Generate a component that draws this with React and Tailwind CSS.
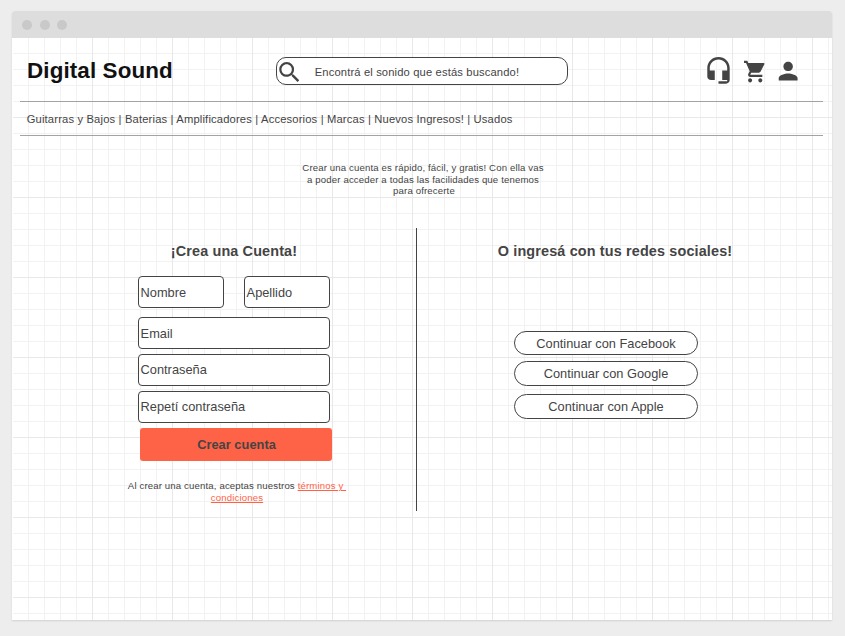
import React from "react";

function Icon({ className, viewBox, d }) {
  return (
    <svg className={className} viewBox={viewBox} preserveAspectRatio="none" fill="#444444" aria-hidden="true">
      <path d={d} />
    </svg>
  );
}

const SEARCH =
  "M15.5 14h-.79l-.28-.27A6.471 6.471 0 0 0 16 9.5 6.5 6.5 0 1 0 9.5 16c1.61 0 3.09-.59 4.23-1.57l.27.28v.79l5 4.99L20.49 19l-4.99-5zm-6 0C7.01 14 5 11.99 5 9.5S7.01 5 9.5 5 14 7.01 14 9.5 11.99 14 9.5 14z";
const HEADSET =
  "M12 1c-4.97 0-9 4.03-9 9v7c0 1.66 1.34 3 3 3h3v-8H5v-2c0-3.87 3.13-7 7-7s7 3.13 7 7v2h-4v8h4v1h-7v2h6c1.66 0 3-1.34 3-3V10c0-4.97-4.03-9-9-9z";
const CART =
  "M7 18c-1.1 0-1.99.9-1.99 2S5.9 22 7 22s2-.9 2-2-.9-2-2-2zM1 2v2h2l3.6 7.59-1.35 2.45c-.16.28-.25.61-.25.96 0 1.1.9 2 2 2h12v-2H7.42c-.14 0-.25-.11-.25-.25l.03-.12.9-1.63h7.45c.75 0 1.41-.41 1.75-1.03l3.58-6.49A1.003 1.003 0 0 0 20 4H5.21l-.94-2H1zm16 16c-1.1 0-1.99.9-1.99 2s.89 2 1.99 2 2-.9 2-2-.9-2-2-2z";
const PERSON =
  "M12 12c2.21 0 4-1.79 4-4s-1.79-4-4-4-4 1.79-4 4 1.79 4 4 4zm0 2c-2.67 0-8 1.34-8 4v2h16v-2c0-2.66-5.33-4-8-4z";

function Field({ label, className }) {
  return (
    <div className={`flex h-8 items-center rounded border border-[#444] bg-white pl-[1.6px] text-[12.8px] ${className}`}>
      {label}
    </div>
  );
}

function SocialButton({ label, className }) {
  return (
    <button
      className={`flex w-[184px] items-center justify-center rounded-full border border-[#444] bg-white text-[12.8px] ${className}`}
    >
      {label}
    </button>
  );
}

export default function App() {
  return (
    <div className="h-[636px] w-[845px] overflow-hidden bg-[#ededed] pl-3 pt-[11px] font-['Liberation_Sans',Arial,sans-serif] text-[#444]">
      <div className="flex h-[609px] w-[820px] flex-col rounded-t-[3px] bg-white shadow-[0_1px_2px_rgba(0,0,0,0.12)]">
        <div className="flex h-[27px] shrink-0 items-center gap-[7.5px] rounded-t-[3px] bg-[#dddddd] pl-[10px]">
          <span className="size-[10px] rounded-full bg-[#c9c9c9]" />
          <span className="size-[10px] rounded-full bg-[#c9c9c9]" />
          <span className="size-[10px] rounded-full bg-[#c9c9c9]" />
        </div>

        <div className="ml-px flex-1 bg-[linear-gradient(to_right,#e8e8e8_1px,transparent_1px),linear-gradient(to_bottom,#e8e8e8_1px,transparent_1px),linear-gradient(to_right,#f2f2f2_1px,transparent_1px),linear-gradient(to_bottom,#f2f2f2_1px,transparent_1px)] bg-[size:80px_80px,80px_80px,16px_16px,16px_16px] bg-[position:-1px_-1px]">
          <div className="ml-[7px] w-[803px]">
            <header className="flex h-[63px] items-start pl-[7px]">
              <h1 className="mt-[19px] w-[249px] text-[22.4px] font-bold leading-[27px] tracking-[0.12px] text-[#111]">
                Digital Sound
              </h1>
              <div className="mt-[19px] flex h-7 w-[292px] items-center rounded-[10px] border border-[#444] bg-white pl-[2.3px]">
                <Icon className="mt-[2px] h-[20px] w-[20px]" viewBox="2.8 3 17.49 17.49" d={SEARCH} />
                <span className="ml-[15.4px] mt-[2px] text-[11.2px] leading-[13px] tracking-[0.145px]">
                  Encontrá el sonido que estás buscando!
                </span>
              </div>
              <Icon className="ml-[139px] mt-[19px] h-[27px] w-[23px]" viewBox="2.76 1 18.49 22.2" d={HEADSET} />
              <Icon className="ml-[14px] mt-[22px] h-[23px] w-[22px]" viewBox="1 1.36 21.6 21.1" d={CART} />
              <Icon className="ml-[12px] mt-[23px] h-[20px] w-[20px]" viewBox="3.4 3.4 16.95 17" d={PERSON} />
            </header>

            <nav className="h-[35px] border-y border-[#a3a3a3] pl-[6.7px] pt-[11px] text-[11.2px] leading-[13px] tracking-[0.166px]">
              Guitarras y Bajos | Baterias | Amplificadores | Accesorios | Marcas | Nuevos Ingresos! | Usados
            </nav>

            <p className="ml-[273px] mt-[26px] w-[260px] text-center text-[9.6px] leading-[11.5px] tracking-[0.145px]">
              Crear una cuenta es rápido, fácil, y gratis! Con ella vas
              <br />
              a poder acceder a todas las facilidades que tenemos
              <br />
              <span className="ml-[2px]">para ofrecerte</span>
            </p>

            <main className="mt-[31.5px] flex h-[283px]">
              <section className="w-[397px] border-r border-[#444] pl-[118px] pt-[15px]">
                <h2 className="w-[192px] text-center text-[14.4px] font-bold leading-[17px] tracking-[0.14px]">
                  ¡Crea una Cuenta!
                </h2>
                <div className="mt-[16px] flex w-[192px] justify-between">
                  <Field label="Nombre" className="w-[86px] pt-[2px]" />
                  <Field label="Apellido" className="w-[86px] pt-[2px]" />
                </div>
                <div className="mt-[9px] flex w-[192px] flex-col gap-[5px]">
                  <Field label="Email" className="w-full pt-[2px]" />
                  <Field label="Contraseña" className="w-full" />
                  <Field label="Repetí contraseña" className="w-full" />
                </div>
                <button className="ml-[2px] mt-[5px] h-[33px] w-[192px] rounded-[3px] bg-[#ff6347] pl-px text-[12.8px] font-bold tracking-[0.04px]">
                  Crear cuenta
                </button>
                <p className="-ml-[21px] mt-[19px] w-[240px] text-center text-[9.6px] leading-[11.5px] tracking-[0.145px]">
                  Al crear una cuenta, aceptas nuestros{" "}
                  <span className="text-[#ff6347] underline">
                    términos y&nbsp;
                    <br />
                    condiciones
                  </span>
                </p>
              </section>

              <section className="flex flex-1 flex-col items-start pl-[77px] pt-[15px]">
                <h2 className="-ml-px w-[244px] text-center text-[14.4px] font-bold leading-[17px] tracking-[0.15px]">
                  O ingresá con tus redes sociales!
                </h2>
                <div className="ml-[20px] mt-[71px]">
                  <SocialButton label="Continuar con Facebook" className="h-6 pt-[2px]" />
                  <SocialButton label="Continuar con Google" className="mt-[6px] h-[25px]" />
                  <SocialButton label="Continuar con Apple" className="mt-[8px] h-[25px]" />
                </div>
              </section>
            </main>
          </div>
        </div>
      </div>
    </div>
  );
}
